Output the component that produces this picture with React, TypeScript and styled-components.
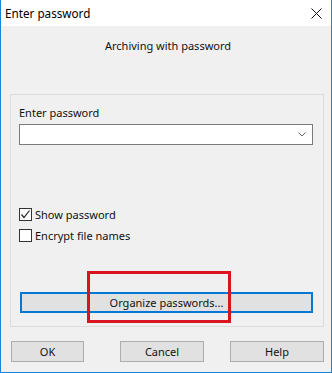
import React from 'react'
import styled, { createGlobalStyle } from 'styled-components'

const GlobalStyle = createGlobalStyle`
  html, body {
    margin: 0;
    padding: 0;
    background: #f0f0f0;
  }
  * {
    box-sizing: border-box;
  }
`

const FONT = `'Segoe UI', 'Noto Sans', 'Liberation Sans', Arial, sans-serif`

const Window = styled('div')`
  display: flex;
  flex-direction: column;
  width: 332px;
  height: 373px;
  border: 1px solid #1883d7;
  border-top: none;
  font-family: ${FONT};
  font-size: 11px;
  color: #111;
  background: #f0f0f0;
`

const TitleBar = styled('div')`
  display: flex;
  align-items: center;
  justify-content: space-between;
  height: 26px;
  padding: 0 9px 0 4px;
  background: #ffffff;
`

const TitleText = styled('span')`
  font-size: 11.7px;
  color: #000;
`

const Body = styled('div')`
  flex: 1;
  display: flex;
  flex-direction: column;
  padding: 0 7px 0 9px;
`

const Heading = styled('div')`
  margin-top: 12px;
  line-height: 16px;
  text-align: center;
  padding-left: 2px;
`

const GroupBox = styled('div')`
  margin-top: 40px;
  display: flex;
  flex-direction: column;
  border: 1px solid #dcdcdc;
  padding: 0 10px 13px 8px;
`

const Label = styled('div')`
  margin-top: 10px;
  line-height: 16px;
`

const Combo = styled('div')`
  margin-top: 3px;
  height: 21px;
  display: flex;
  align-items: center;
  justify-content: flex-end;
  padding-right: 6px;
  background: #ffffff;
  border: 1px solid #7a7a7a;
`

const CheckRow = styled('label')<{ $top: number }>`
  display: flex;
  align-items: center;
  gap: 3px;
  height: 13px;
  margin-top: ${(p) => p.$top}px;
`

const Box = styled('span')`
  display: flex;
  align-items: center;
  justify-content: center;
  width: 13px;
  height: 13px;
  border: 1px solid #333333;
  background: #ffffff;
`

const OrganizeWrap = styled('div')`
  position: relative;
  margin-top: 50px;
  margin-left: 1px;
`

const OrganizeButton = styled('div')`
  height: 21px;
  display: flex;
  align-items: center;
  justify-content: center;
  background: #e1e1e1;
  border: 2px solid #0078d7;
`

const Highlight = styled('div')`
  position: absolute;
  left: 67px;
  top: -21px;
  width: 144px;
  height: 52px;
  border: 3px solid #d7141f;
  pointer-events: none;
`

const ButtonRow = styled('div')`
  display: flex;
  margin-top: 14px;
  margin-left: 1px;
`

const Button = styled('div')<{ $width: number; $gap?: number }>`
  width: ${(p) => p.$width}px;
  margin-left: ${(p) => p.$gap ?? 0}px;
  height: 21px;
  display: flex;
  align-items: center;
  justify-content: center;
  background: #e1e1e1;
  border: 1px solid #adadad;
`

const CloseIcon = () => (
  <svg width="11" height="11" viewBox="0 0 11 11">
    <path d="M0.5 0.5 L10.5 10.5 M10.5 0.5 L0.5 10.5" stroke="#111" strokeWidth="1" />
  </svg>
)

const Chevron = () => (
  <svg width="8" height="5" viewBox="0 0 8 5">
    <path d="M0.5 0.5 L4 4 L7.5 0.5" stroke="#666" strokeWidth="1" fill="none" />
  </svg>
)

const Tick = () => (
  <svg width="11" height="11" viewBox="0 0 11 11">
    <path d="M1.5 5.5 L4 8.5 L9.5 1.5" stroke="#222" strokeWidth="1.2" fill="none" />
  </svg>
)

const App: React.FC = () => {
  return (
    <>
      <GlobalStyle />
      <Window>
        <TitleBar>
          <TitleText>Enter password</TitleText>
          <CloseIcon />
        </TitleBar>
        <Body>
          <Heading>Archiving with password</Heading>
          <GroupBox>
            <Label>Enter password</Label>
            <Combo>
              <Chevron />
            </Combo>
            <CheckRow $top={63}>
              <Box>
                <Tick />
              </Box>
              Show password
            </CheckRow>
            <CheckRow $top={8}>
              <Box />
              Encrypt file names
            </CheckRow>
            <OrganizeWrap>
              <OrganizeButton>Organize passwords...</OrganizeButton>
              <Highlight />
            </OrganizeWrap>
          </GroupBox>
          <ButtonRow>
            <Button $width={73}>OK</Button>
            <Button $width={84} $gap={36}>Cancel</Button>
            <Button $width={94} $gap={26}>Help</Button>
          </ButtonRow>
        </Body>
      </Window>
    </>
  )
}

export default App
